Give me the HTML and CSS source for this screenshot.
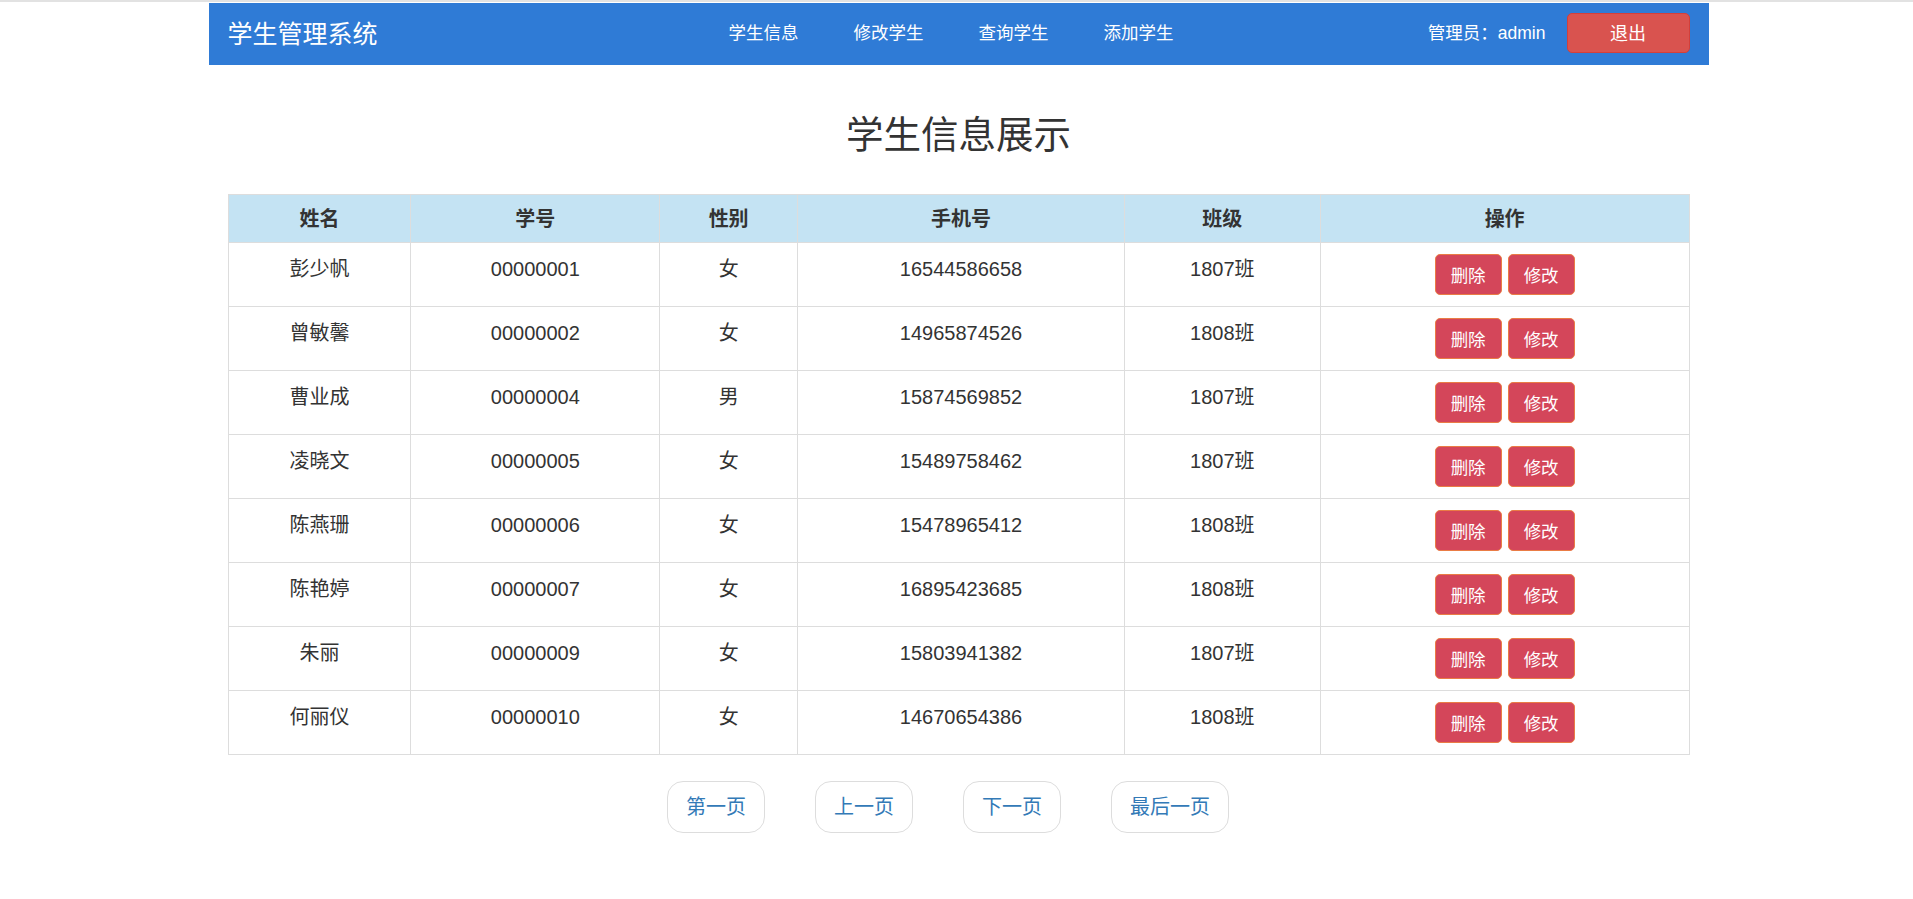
FILE: index.html
```html
<!DOCTYPE html>
<html lang="zh-CN">
<head>
<meta charset="utf-8">
<title>学生管理系统</title>
<link rel="stylesheet" href="styles.css">
</head>
<body>
<div class="topline"></div>
<div class="container">
  <nav class="navbar">
    <div class="brand">学生管理系统</div>
    <ul class="links">
      <li><a href="#">学生信息</a></li>
      <li><a href="#">修改学生</a></li>
      <li><a href="#">查询学生</a></li>
      <li><a href="#">添加学生</a></li>
    </ul>
    <div class="user">
      <span class="admin">管理员：admin</span>
      <button class="logout">退出</button>
    </div>
  </nav>

  <h1 class="title">学生信息展示</h1>

  <table class="grid">
    <colgroup>
      <col class="c1"><col class="c2"><col class="c3"><col class="c4"><col class="c5"><col class="c6">
    </colgroup>
    <thead>
      <tr><th>姓名</th><th>学号</th><th>性别</th><th>手机号</th><th>班级</th><th>操作</th></tr>
    </thead>
    <tbody>
      <tr><td>彭少帆</td><td>00000001</td><td>女</td><td>16544586658</td><td>1807班</td><td class="ops"><button class="op">删除</button><button class="op">修改</button></td></tr>
      <tr><td>曾敏馨</td><td>00000002</td><td>女</td><td>14965874526</td><td>1808班</td><td class="ops"><button class="op">删除</button><button class="op">修改</button></td></tr>
      <tr><td>曹业成</td><td>00000004</td><td>男</td><td>15874569852</td><td>1807班</td><td class="ops"><button class="op">删除</button><button class="op">修改</button></td></tr>
      <tr><td>凌晓文</td><td>00000005</td><td>女</td><td>15489758462</td><td>1807班</td><td class="ops"><button class="op">删除</button><button class="op">修改</button></td></tr>
      <tr><td>陈燕珊</td><td>00000006</td><td>女</td><td>15478965412</td><td>1808班</td><td class="ops"><button class="op">删除</button><button class="op">修改</button></td></tr>
      <tr><td>陈艳婷</td><td>00000007</td><td>女</td><td>16895423685</td><td>1808班</td><td class="ops"><button class="op">删除</button><button class="op">修改</button></td></tr>
      <tr><td>朱丽</td><td>00000009</td><td>女</td><td>15803941382</td><td>1807班</td><td class="ops"><button class="op">删除</button><button class="op">修改</button></td></tr>
      <tr><td>何丽仪</td><td>00000010</td><td>女</td><td>14670654386</td><td>1808班</td><td class="ops"><button class="op">删除</button><button class="op">修改</button></td></tr>
    </tbody>
  </table>

  <div class="pager">
    <a class="page" href="#">第一页</a>
    <a class="page" href="#">上一页</a>
    <a class="page" href="#">下一页</a>
    <a class="page" href="#">最后一页</a>
  </div>
</div>
</body>
</html>
```

FILE: styles.css
```css
html, body {
  margin: 0;
  padding: 0;
  background: #fff;
}
body {
  font-family: "Liberation Sans", "Noto Sans CJK SC", sans-serif;
  color: #333;
  font-size: 17.5px;
}
.topline {
  height: 2px;
  background: #e2e2e2;
  margin-bottom: 1px;
}
.container {
  width: 1500px;
  margin-left: calc(50% - 748px);
}
.navbar {
  height: 62px;
  background: #2f7bd6;
  display: flex;
  align-items: center;
  padding: 0 19px 2px;
  box-sizing: border-box;
}
.brand {
  color: #fff;
  font-size: 25px;
  width: 150px;
  white-space: nowrap;
  padding-bottom: 3px;
}
.links {
  list-style: none;
  margin: 0 0 0 351px;
  padding: 0 0 3px;
  display: flex;
  gap: 55px;
}
.links a {
  color: #fff;
  text-decoration: none;
  font-size: 17.5px;
}
.user {
  margin-left: auto;
  display: flex;
  align-items: center;
  gap: 21px;
}
.admin {
  color: #fff;
  font-size: 17.5px;
  padding-bottom: 3px;
}
.logout {
  width: 123px;
  height: 40px;
  background: #d9534f;
  border: 1px solid #d43f3a;
  border-radius: 5px;
  color: #fff;
  font-size: 18px;
  font-family: inherit;
  padding: 0 0 2px;
}
.title {
  margin: 48px 0 36px;
  height: 45px;
  line-height: 45px;
  font-size: 37.5px;
  font-weight: 400;
  text-align: center;
  color: #333;
}
.grid {
  width: 1462px;
  margin: 0 auto;
  border-collapse: collapse;
  font-size: 20px;
}
.c1 { width: 183px; }
.c2 { width: 249px; }
.c3 { width: 138px; }
.c4 { width: 327px; }
.c5 { width: 196px; }
.c6 { width: 369px; }
.grid th {
  background: #c4e3f3;
  font-weight: bold;
  height: 48px;
  padding: 0 10px;
  line-height: 28px;
  border: 1px solid #ddd;
  box-sizing: border-box;
}
.grid td {
  border: 1px solid #ddd;
  text-align: center;
  vertical-align: top;
  padding: 12px 10px 0;
  height: 64px;
  line-height: 28px;
  box-sizing: border-box;
}
.grid td.ops {
  padding-top: 10px;
}
.op {
  display: inline-block;
  vertical-align: top;
  height: 41px;
  padding: 0 15px;
  margin: 1px 3px 0;
  background: #d4465a;
  border: 1px solid #ea7c45;
  border-radius: 5px;
  color: #fff;
  font-size: 17.5px;
  font-family: inherit;
}
.pager {
  display: flex;
  justify-content: center;
  gap: 50px;
  margin-top: 26px;
  padding-right: 21px;
}
.page {
  display: inline-block;
  height: 52px;
  line-height: 50px;
  padding: 0 18px;
  border: 1px solid #ddd;
  border-radius: 16px;
  color: #337ab7;
  text-decoration: none;
  font-size: 20px;
  box-sizing: border-box;
}
```
